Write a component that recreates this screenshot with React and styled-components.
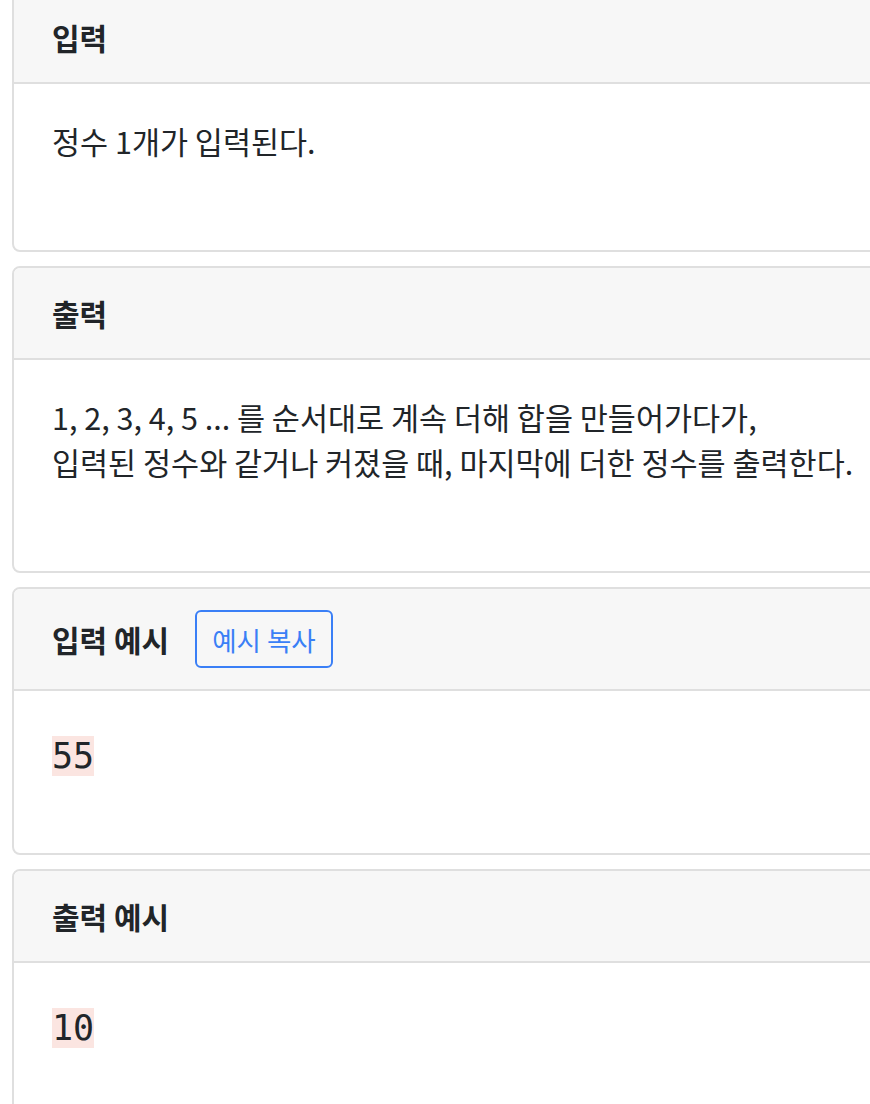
import styled, { createGlobalStyle } from "styled-components";

const GlobalStyle = createGlobalStyle`
  html, body {
    margin: 0;
    padding: 0;
    background: #ffffff;
    overflow: hidden;
  }
  body {
    font-family: "Noto Sans CJK KR", "Noto Sans", sans-serif;
    color: #212529;
  }
`;

const Page = styled.div`
  margin-top: -10px;
  padding-left: 12px;
  width: 920px;
`;

const Card = styled.section`
  border: 2px solid #dfdfdf;
  border-radius: 8px;
  margin-bottom: 14px;
  overflow: hidden;
  background: #ffffff;
`;

const CardHeader = styled.div`
  display: flex;
  align-items: center;
  gap: 26px;
  padding: 21px 38px;
  background: #f7f7f7;
  border-bottom: 2px solid #dfdfdf;
`;

const Title = styled.h3`
  margin: 0;
  font-size: 30px;
  font-weight: 700;
  line-height: 48px;
  color: #212529;
`;

const CopyButton = styled.button`
  height: 58px;
  padding: 0 15px;
  border: 2px solid #3a7ff6;
  border-radius: 6px;
  background: transparent;
  color: #3a7ff6;
  font-family: "Noto Sans CJK KR", "Noto Sans", sans-serif;
  font-size: 26.5px;
  font-weight: 400;
  cursor: pointer;
`;

const CardBody = styled.div`
  padding: 35px 38px 40px;
`;

const Text = styled.p`
  margin: 0 0 46px;
  font-size: 30.5px;
  line-height: 45px;
  color: #212529;
`;

const Sample = styled.pre`
  margin: 8px 0 29px;
  line-height: 45px;
  font-family: inherit;
`;

const Code = styled.code`
  font-family: "DejaVu Sans Mono", "Liberation Mono", monospace;
  font-size: 35px;
  color: #212529;
  background: #fbe5e1;
`;

// 문제 설명 카드 하나
const Section = ({ title, children, copy }) => (
  <Card>
    <CardHeader>
      <Title>{title}</Title>
      {copy && <CopyButton>예시 복사</CopyButton>}
    </CardHeader>
    <CardBody>{children}</CardBody>
  </Card>
);

const App = () => {
  return (
    <>
      <GlobalStyle />
      <Page>
        <Section title="입력">
          <Text>정수 1개가 입력된다.</Text>
        </Section>
        <Section title="출력">
          <Text>
            1, 2, 3, 4, 5 ... 를 순서대로 계속 더해 합을 만들어가다가,
            <br />
            입력된 정수와 같거나 커졌을 때, 마지막에 더한 정수를 출력한다.
          </Text>
        </Section>
        <Section title="입력 예시" copy>
          <Sample>
            <Code>55</Code>
          </Sample>
        </Section>
        <Section title="출력 예시">
          <Sample>
            <Code>10</Code>
          </Sample>
        </Section>
      </Page>
    </>
  );
};

export default App;
